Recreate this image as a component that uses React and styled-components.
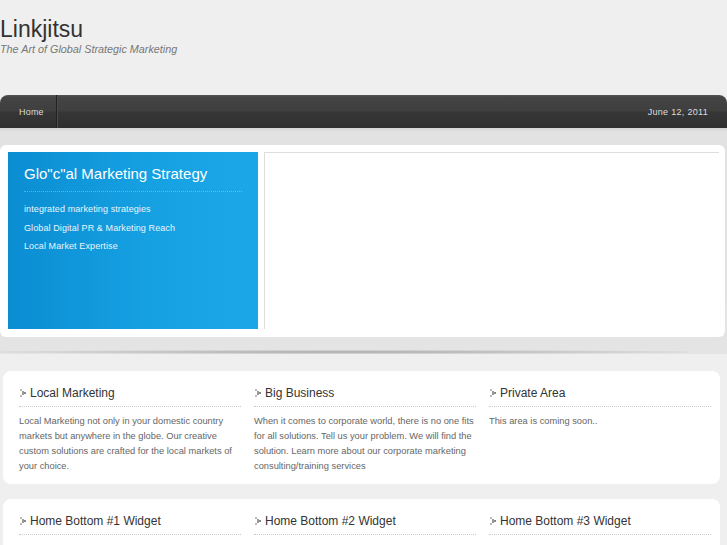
import React from 'react';
import styled, { createGlobalStyle } from 'styled-components';

const GlobalStyle = createGlobalStyle`
    html, body {
        margin: 0;
        padding: 0;
        background: #efefef;
        font-family: "Liberation Sans", Arial, sans-serif;
    }
`;

const columns = [
    {
        title: 'Local Marketing',
        text: 'Local Marketing not only in your domestic country markets but anywhere in the globe. Our creative custom solutions are crafted for the local markets of your choice.'
    },
    {
        title: 'Big Business',
        text: 'When it comes to corporate world, there is no one fits for all solutions. Tell us your problem. We will find the solution. Learn more about our corporate marketing consulting/training services'
    },
    {
        title: 'Private Area',
        text: 'This area is coming soon..'
    }
];

const bottomWidgets = [1, 2, 3].map(n => ({
    title: `Home Bottom #${n} Widget`,
    text: 'This is a widget area which is called Home Bottom #' + n + '.'
}));

const Arrow = () => (
    <svg width="6" height="8" viewBox="0 0 6 8">
        <rect x="0" y="0" width="2" height="2" fill="#bbb"/>
        <rect x="2" y="2" width="2" height="2" fill="#999"/>
        <rect x="4" y="3" width="2" height="2" fill="#888"/>
        <rect x="2" y="4" width="2" height="2" fill="#999"/>
        <rect x="0" y="6" width="2" height="2" fill="#bbb"/>
    </svg>
);

const Widget = ({title, text}) => (
    <Column>
        <WidgetTitle><Arrow/>{title}</WidgetTitle>
        <WidgetText>{text}</WidgetText>
    </Column>
);

export default function App() {
    return (
        <Page>
            <GlobalStyle/>
            <Header>
                <Logo>Linkjitsu</Logo>
                <Tagline>The Art of Global Strategic Marketing</Tagline>
            </Header>

            <Nav>
                <NavItem>Home</NavItem>
                <NavDate>June 12, 2011</NavDate>
            </Nav>

            <FeatureWrap>
                <Feature>
                    <BluePanel>
                        <BlueTitle>Glo"c"al Marketing Strategy</BlueTitle>
                        <BlueList>
                            <li>integrated marketing strategies</li>
                            <li>Global Digital PR &amp; Marketing Reach</li>
                            <li>Local Market Expertise</li>
                        </BlueList>
                    </BluePanel>
                    <SlideArea/>
                </Feature>
            </FeatureWrap>

            <Card>
                {columns.map(c => <Widget key={c.title} {...c}/>)}
            </Card>

            <Card>
                {bottomWidgets.map(c => <Widget key={c.title} {...c}/>)}
            </Card>
        </Page>
    );
}

const Page = styled.div`
    width: 727px;
    overflow: hidden;
`;

const Header = styled.div`
    height: 95px;
    padding-top: 15px;
    box-sizing: border-box;
`;

const Logo = styled.h1`
    margin: 0;
    font-size: 23px;
    font-weight: normal;
    color: #333;
    line-height: 28px;
`;

const Tagline = styled.p`
    margin: 0;
    font-size: 10.8px;
    font-style: italic;
    color: #777;
    line-height: 13px;
`;

const Nav = styled.div`
    height: 33px;
    display: flex;
    align-items: stretch;
    justify-content: space-between;
    border-radius: 8px 8px 0 0;
    background: linear-gradient(to bottom, #555 0px, #444 2px, #3f3f3f 16px, #363636 17px, #2f2f2f 33px);
`;

const NavItem = styled.div`
    width: 37px;
    padding-left: 19px;
    display: flex;
    align-items: center;
    font-size: 9px;
    letter-spacing: 0.2px;
    color: #ddd;
    border-right: 1px solid #222;
    box-shadow: 1px 0 0 #4a4a4a;
`;

const NavDate = styled.div`
    display: flex;
    align-items: center;
    padding-right: 19px;
    font-size: 9px;
    letter-spacing: 0.3px;
    color: #ddd;
`;

const FeatureWrap = styled.div`
    background: linear-gradient(to bottom, #d4d4d4 0px, #e2e2e2 4px, #e4e4e4 100%);
    padding: 17px 2px 17px 0;
    position: relative;
    margin-bottom: 17px;

    &::after {
        content: '';
        position: absolute;
        left: 0;
        right: 40px;
        bottom: 0;
        height: 4px;
        background: radial-gradient(ellipse at center, #aaa 0%, #ccc 50%, rgba(220, 220, 220, 0) 80%);
    }
`;

const Feature = styled.div`
    background: #fff;
    border-radius: 6px;
    padding: 7px 6px 8px 8px;
    display: flex;
    gap: 6px;
    height: 177px;
`;

const BluePanel = styled.div`
    width: 250px;
    flex: none;
    background: linear-gradient(to right, #0b8dd2 0%, #15a0e2 55%, #1ca8e8 100%);
    padding: 14px 16px;
    box-sizing: border-box;
`;

const BlueTitle = styled.h2`
    margin: 0 0 12px;
    padding-bottom: 9px;
    font-size: 15px;
    font-weight: normal;
    color: #fff;
    line-height: 16px;
    border-bottom: 1px dotted rgba(255, 255, 255, 0.3);
`;

const BlueList = styled.ul`
    margin: 0;
    padding: 0;
    list-style: none;
    font-size: 9px;
    letter-spacing: 0.1px;
    color: #e8f5fc;

    li {
        line-height: 11px;
        margin-bottom: 7.5px;
    }
`;

const SlideArea = styled.div`
    flex: 1;
    border-top: 1px solid #ddd;
    border-left: 1px solid #ddd;
`;

const Card = styled.div`
    margin: 0 7px 15px 3px;
    background: #fff;
    border-radius: 8px;
    padding: 16px 9px 10px 16px;
    display: flex;
    gap: 13px;
`;

const Column = styled.div`
    width: 222px;
    flex: none;
`;

const WidgetTitle = styled.h3`
    margin: 0 0 7px;
    padding: 0 0 7px 1px;
    display: flex;
    align-items: center;
    gap: 4px;
    font-size: 12px;
    font-weight: normal;
    color: #333;
    line-height: 12px;
    border-bottom: 1px dotted #ccc;
`;

const WidgetText = styled.p`
    margin: 0;
    font-size: 9.3px;
    line-height: 15px;
    color: #666;
`;
